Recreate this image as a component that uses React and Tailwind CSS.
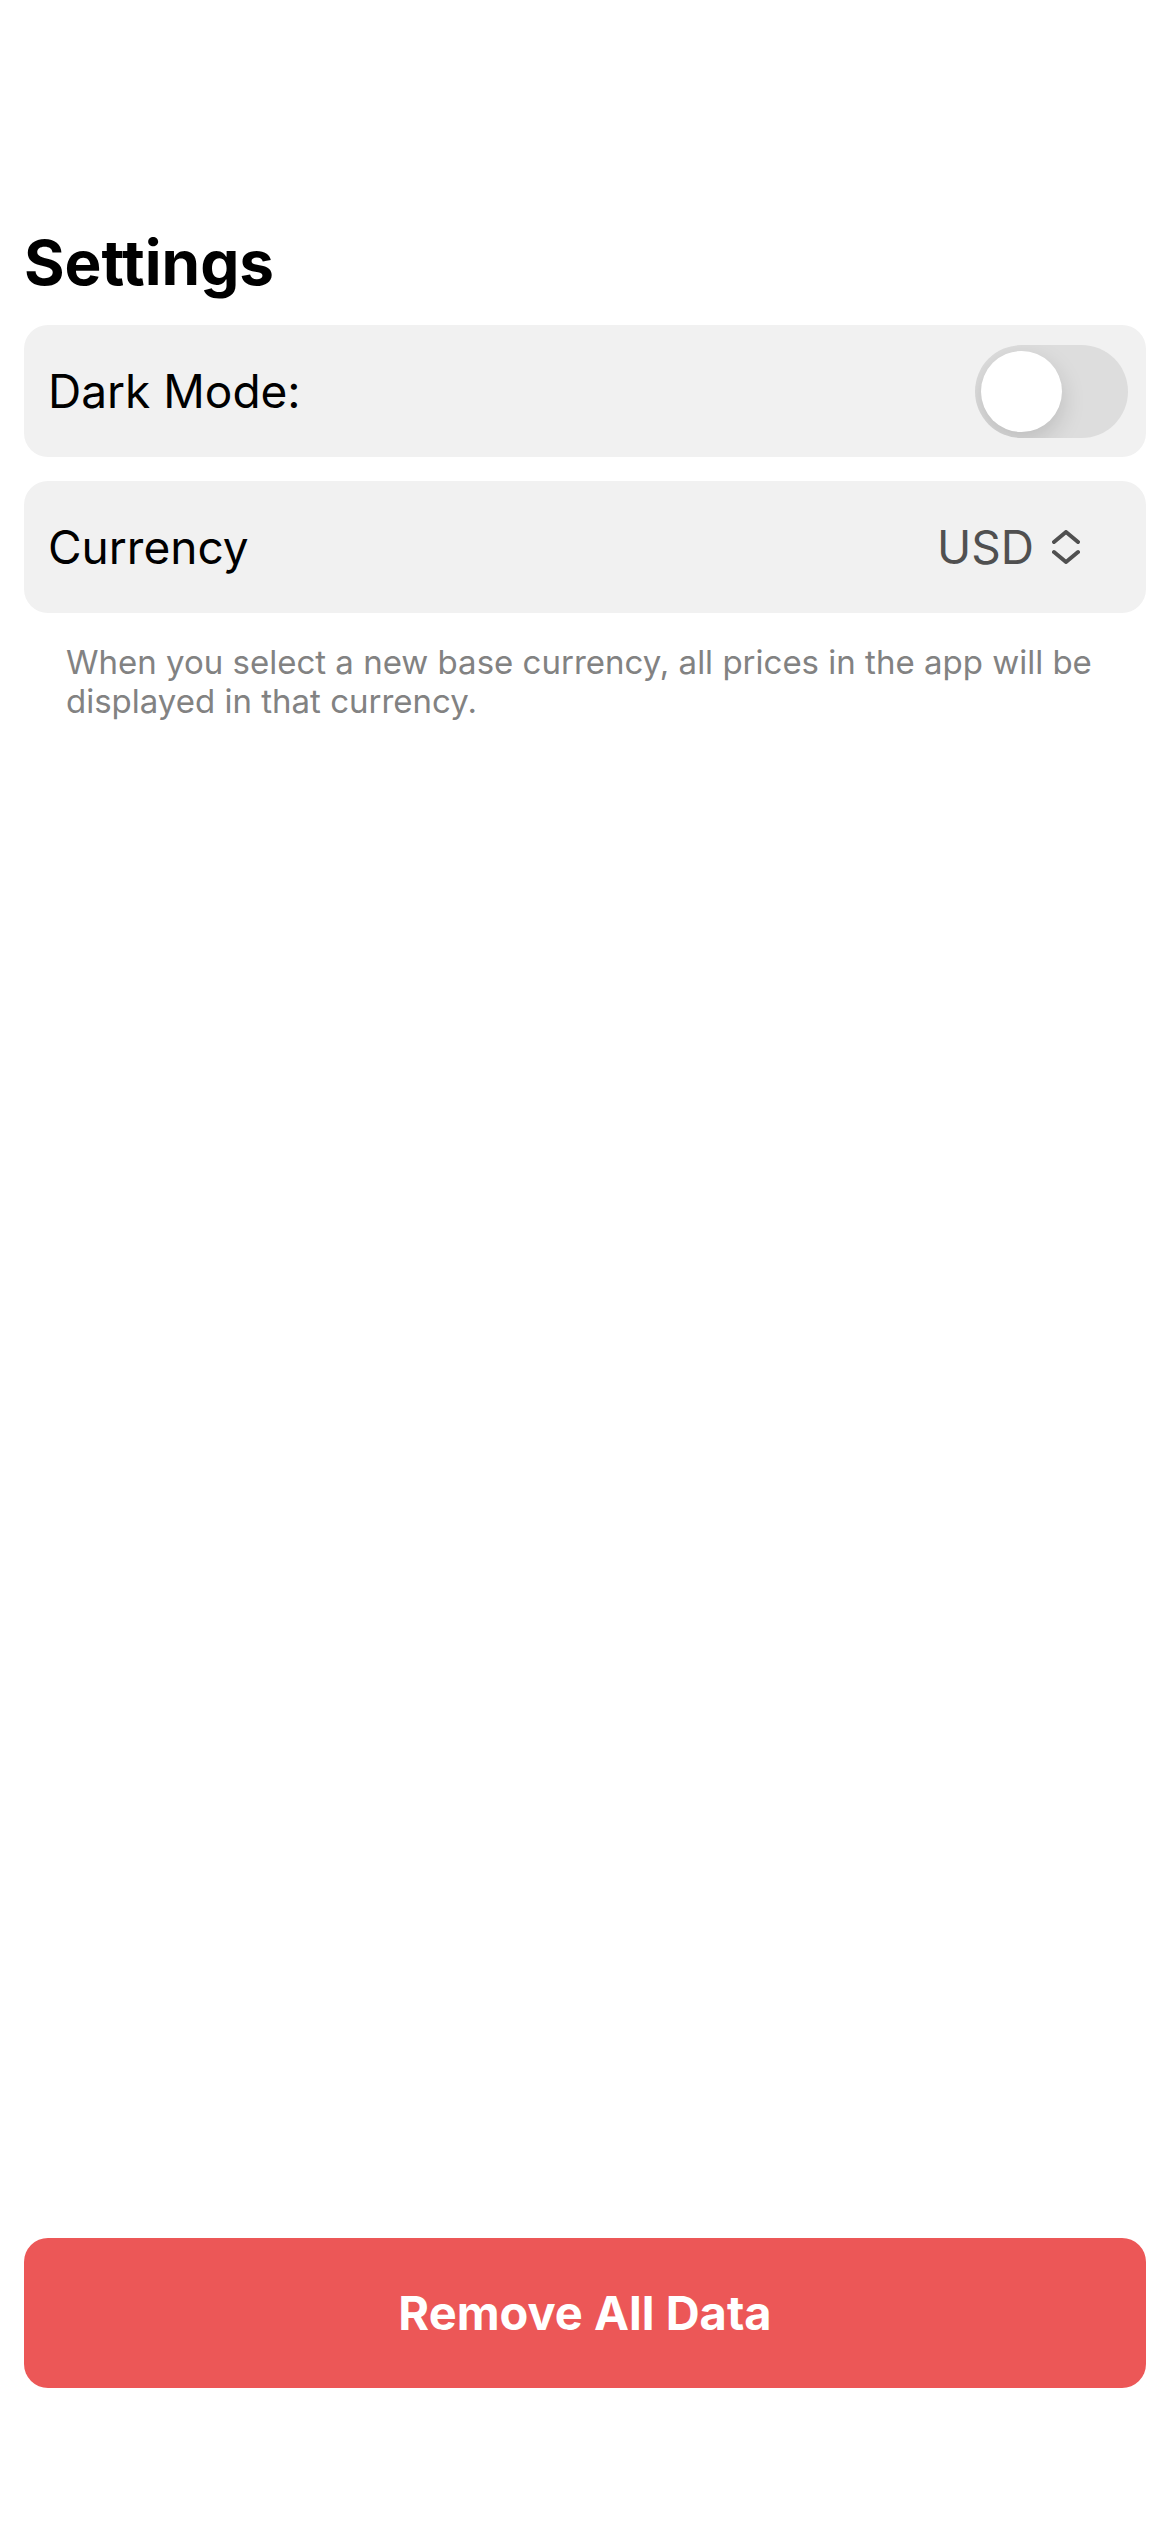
export default function App() {
  return (
    <main className="flex min-h-screen flex-col bg-white px-6 pt-[223px] pb-36 font-['Inter',sans-serif] text-black">
      <h1 className="text-[62px] leading-[80px] font-bold">Settings</h1>
      <section className="mt-[22px] flex flex-col gap-6">
        <div className="flex h-[132px] items-center justify-between rounded-3xl bg-[#f1f1f1] pr-[18px] pl-6 text-[46px]">
          <label htmlFor="dark-mode">Dark Mode:</label>
          <input
            id="dark-mode"
            type="checkbox"
            role="switch"
            className="flex h-[93px] w-[153px] appearance-none items-center overflow-hidden rounded-full bg-[#dddddd] p-1.5 before:size-[81px] before:rounded-full before:bg-white before:shadow-[0_9px_24px_rgba(0,0,0,0.15)] checked:justify-end checked:bg-green-500"
          />
        </div>
        <div className="flex h-[132px] items-center justify-between rounded-3xl bg-[#f1f1f1] pr-[66px] pl-6 text-[46px]">
          <label htmlFor="currency">Currency</label>
          <div className="flex items-center gap-[18px] text-[#505050]">
            <select id="currency" className="appearance-none bg-transparent">
              <option>USD</option>
            </select>
            <svg className="h-[34px] w-7" viewBox="0 0 28 34" fill="none" stroke="currentColor" strokeWidth="4" strokeLinecap="round" strokeLinejoin="round" aria-hidden="true">
              <path d="M2 12 14 2l12 10M2 22l12 10 12-10" />
            </svg>
          </div>
        </div>
      </section>
      <p className="mt-[30px] px-[42px] text-[33px] leading-[39px] text-[#828282]">
        When you select a new base currency, all prices in the app will be displayed in that currency.
      </p>
      <button type="button" className="mt-auto h-[150px] rounded-3xl bg-[#ec5757] text-[47px] font-bold text-white">
        Remove All Data
      </button>
    </main>
  );
}
